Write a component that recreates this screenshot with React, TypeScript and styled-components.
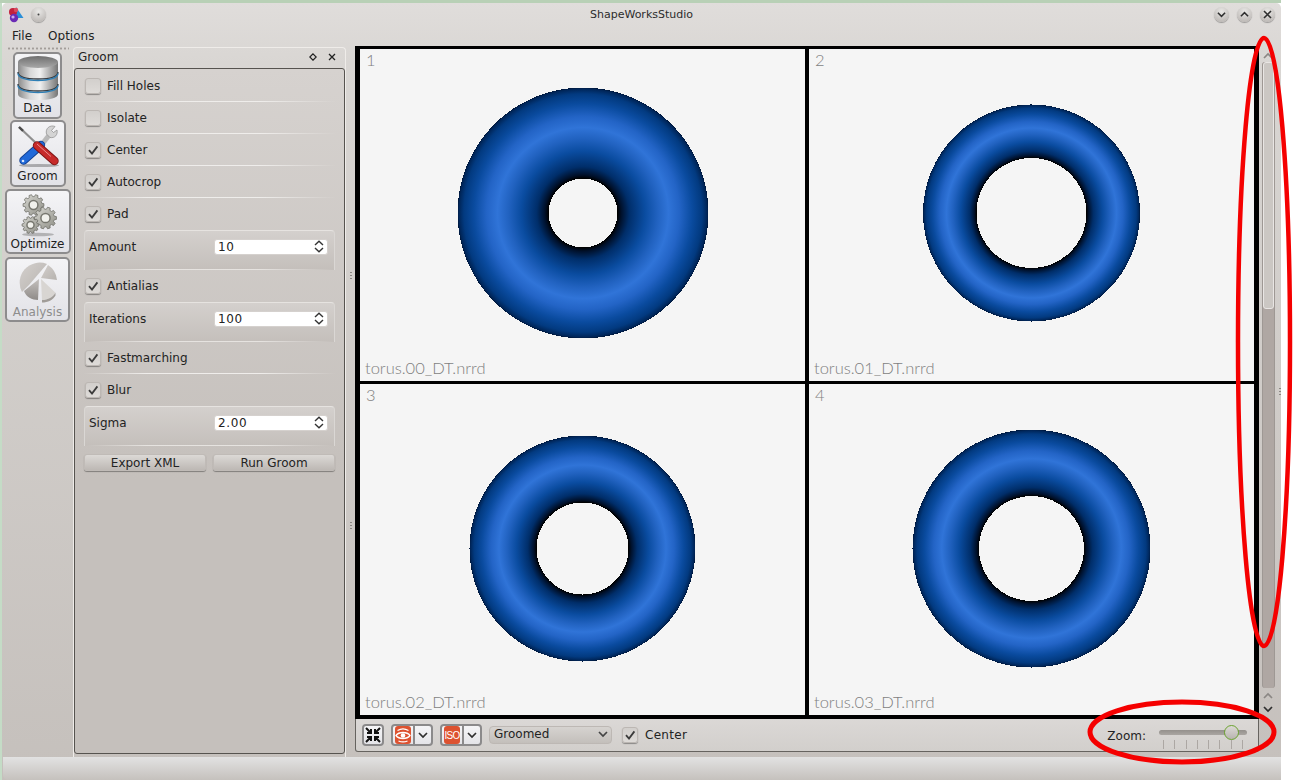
import React from "react";
import styled, { createGlobalStyle } from "styled-components";

const GlobalStyle = createGlobalStyle`
    html, body {
        margin: 0;
        padding: 0;
        background: #fff;
    }
    body {
        font-family: "DejaVu Sans", "Liberation Sans", sans-serif;
        font-size: 12px;
        color: #232323;
    }
`;

const Page = styled.div`
    position: relative;
    width: 1295px;
    height: 780px;
    overflow: hidden;
    background: linear-gradient(to right, #c4dcc6 2px, #fff 2px);
`;

const DesktopStrip = styled.div`
    width: 1281px;
    height: 3px;
    background: #b8d0b6;
`;

const Window = styled.div`
    margin-left: 2px;
    width: 1279px;
    height: 777px;
    display: flex;
    flex-direction: column;
    border-radius: 5px 5px 0 0;
    background: linear-gradient(to bottom, #e0dddb 0, #d9d6d3 60px, #c5c0bc 100%);
`;

const TitleBar = styled.div`
    height: 23px;
    display: flex;
    align-items: center;
    padding: 0 6px;
`;

const TitleLeft = styled.div`
    width: 200px;
    display: flex;
    align-items: center;
    gap: 6px;
`;

const TitleText = styled.div`
    flex: 1;
    text-align: center;
    font-size: 11px;
    color: #2c2c2c;
`;

const TitleRight = styled.div`
    width: 200px;
    display: flex;
    justify-content: flex-end;
    gap: 8px;
`;

const RoundButton = styled.div`
    width: 15px;
    height: 15px;
    border-radius: 50%;
    display: flex;
    align-items: center;
    justify-content: center;
    background: radial-gradient(circle at 50% 30%, #e9e8e6, #c0bcb9 75%, #a9a5a2);
    box-shadow: 0 1px 1px rgba(0, 0, 0, 0.3);
`;

const MenuBar = styled.div`
    height: 19px;
    display: flex;
    align-items: center;
    gap: 16px;
    padding-left: 10px;
    font-size: 12px;
`;

const Body = styled.div`
    flex: 1;
    min-height: 0;
    display: flex;
`;

const ToolColumn = styled.div`
    width: 71px;
    display: flex;
    flex-direction: column;
    align-items: center;
`;

const ToolGrip = styled.div`
    width: 62px;
    height: 3px;
    margin: 2px 0;
    background-image: radial-gradient(circle, #a39e9a 1px, transparent 1.2px);
    background-size: 4px 3px;
`;

const ToolButton = styled.div<{ $width: number; $height: number; $gap: number; $pad: number; $disabled?: boolean }>`
    box-sizing: border-box;
    width: ${(p) => p.$width}px;
    height: ${(p) => p.$height}px;
    margin-bottom: ${(p) => p.$gap}px;
    border: 2px solid #8d8c8d;
    border-radius: 5px;
    background: linear-gradient(to bottom, #f4f4f6, #e2e2e7);
    display: flex;
    flex-direction: column;
    align-items: center;
    justify-content: flex-end;
    padding-bottom: ${(p) => p.$pad}px;
    font-size: 12px;
    line-height: 15px;
    color: ${(p) => (p.$disabled ? "#8d8d8d" : "#1e1e1e")};
    svg {
        flex: none;
    }
`;

const Dock = styled.div`
    width: 273px;
    display: flex;
    flex-direction: column;
    margin-top: 2px;
    border: 1px solid #efece9;
    border-bottom: none;
    border-radius: 4px 4px 0 0;
    box-sizing: border-box;
`;

const DockHeader = styled.div`
    height: 20px;
    box-sizing: border-box;
    display: flex;
    align-items: center;
    justify-content: space-between;
    padding: 0 9px 2px 4px;
    font-size: 12px;
`;

const DockTools = styled.div`
    display: flex;
    gap: 11px;
    align-items: center;
`;

const DockPanel = styled.div`
    flex: 1;
    margin: 0 0 3px 0;
    border: 1px solid #56534f;
    border-radius: 3px;
    padding: 1px 9px 0 9px;
    background: linear-gradient(to bottom, #d6d2cf, #c5c0bc 60%);
`;

const OptionRow = styled.div<{ $plain?: boolean }>`
    height: 32px;
    box-sizing: border-box;
    display: flex;
    align-items: center;
    gap: 6px;
    padding: 0 0 0 1px;
    border-bottom: 1px solid transparent;
    border-image: ${(p) =>
        p.$plain
            ? "none"
            : "linear-gradient(to right, transparent, #efedeb 25%, #efedeb 70%, transparent) 1"};
`;

const CheckBox = styled.div`
    width: 16px;
    height: 16px;
    flex: none;
    box-sizing: border-box;
    border-radius: 3px;
    border: 1px solid #bcb7b3;
    background: linear-gradient(to bottom, #d2cfcc, #dedbd8);
    box-shadow: 0 1px 1px rgba(0, 0, 0, 0.35);
    display: flex;
    align-items: center;
    justify-content: center;
`;

const ValueGroup = styled.div`
    height: 40px;
    box-sizing: border-box;
    display: flex;
    align-items: center;
    justify-content: space-between;
    padding: 0 6px 8px 4px;
    border-radius: 4px 4px 0 0;
    border-top: 1px solid #e6e3e0;
    border-left: 1px solid #dad7d4;
    border-right: 1px solid #dad7d4;
    background:
        linear-gradient(to right, transparent, #e6e3e0 25%, #e6e3e0 70%, transparent) bottom / 100% 1px no-repeat,
        linear-gradient(to bottom, #d4d0cd, #c4bfbb);
`;

const SpinBox = styled.div`
    width: 114px;
    height: 16px;
    box-sizing: border-box;
    border-radius: 3px;
    background: #fff;
    border: 1px solid #d5d1ce;
    display: flex;
    align-items: center;
    justify-content: space-between;
    padding: 0 3px;
    font-size: 12px;
    letter-spacing: 0.6px;
`;

const ActionRow = styled.div`
    display: flex;
    gap: 7px;
    margin-top: 8px;
`;

const PushButton = styled.div`
    flex: 1;
    height: 17px;
    box-sizing: border-box;
    border-radius: 3px;
    display: flex;
    align-items: center;
    justify-content: center;
    font-size: 12px;
    border: 1px solid #c0bbb7;
    background: linear-gradient(to bottom, #dcd9d6, #bdb8b4);
    box-shadow: 0 1px 1px rgba(0, 0, 0, 0.35);
`;

const Splitter = styled.div`
    width: 9px;
    display: flex;
    flex-direction: column;
    align-items: center;
    justify-content: center;
    gap: 242px;
`;

const GripDots = styled.div`
    width: 2px;
    height: 8px;
    background-image: linear-gradient(to bottom, #8b8783 1px, transparent 1px);
    background-size: 2px 3px;
`;

const ViewColumn = styled.div`
    width: 904px;
    display: flex;
    flex-direction: column;
`;

const ViewGrid = styled.div`
    height: 673px;
    margin-top: 1px;
    box-sizing: border-box;
    background: #000;
    padding: 3px 5px 4px 5px;
    display: grid;
    grid-template-columns: 445px 445px;
    grid-template-rows: 332px 331px;
    column-gap: 4px;
    row-gap: 3px;
`;

const ViewCell = styled.div`
    display: grid;
    background: #f5f5f5;
    color: #7f7f7f;
    font-family: Lato, "Open Sans", sans-serif;
    font-weight: 300;
    overflow: hidden;
    > * {
        grid-area: 1 / 1;
    }
`;

const CellIndex = styled.div`
    align-self: start;
    padding: 1px 0 0 6px;
    font-size: 16.5px;
    line-height: 20px;
`;

const CellName = styled.div`
    align-self: end;
    padding: 0 0 3px 5px;
    font-size: 16.5px;
    line-height: 20px;
`;

const ViewToolbar = styled.div`
    height: 33px;
    box-sizing: border-box;
    border: 1px solid #66635f;
    border-top: none;
    border-radius: 0 0 3px 3px;
    background: linear-gradient(to bottom, #dbd8d6, #d2cfcc);
    display: flex;
    align-items: center;
    padding: 0 11px 0 6px;
    font-size: 12px;
`;

const IconButton = styled.div`
    width: 22px;
    height: 22px;
    box-sizing: border-box;
    border: 2px solid #8b8a8b;
    border-radius: 4px;
    background: linear-gradient(to bottom, #f5f5f7, #e4e4e8);
    display: flex;
    align-items: center;
    justify-content: center;
`;

const SplitButton = styled.div`
    width: 42px;
    height: 22px;
    margin-left: 7px;
    box-sizing: border-box;
    border: 2px solid #8b8a8b;
    border-radius: 4px;
    background: linear-gradient(to bottom, #f5f5f7, #e4e4e8);
    display: flex;
    align-items: center;
    overflow: hidden;
`;

const SplitFace = styled.div`
    width: 22px;
    display: flex;
    justify-content: center;
    border-right: 2px solid #8b8a8b;
    height: 100%;
    align-items: center;
    box-sizing: border-box;
`;

const SplitArrow = styled.div`
    flex: 1;
    display: flex;
    justify-content: center;
    align-items: center;
`;

const ComboBox = styled.div`
    width: 123px;
    height: 18px;
    margin: 0 10px 0 7px;
    box-sizing: border-box;
    border-radius: 4px;
    border: 1px solid #bdb8b4;
    background: linear-gradient(to bottom, #d6d3d0, #c3bfbb);
    display: flex;
    align-items: center;
    justify-content: space-between;
    padding: 0 3px 2px 4px;
    font-size: 12px;
`;

const CenterLabel = styled.span`
    margin-left: 7px;
    letter-spacing: 0.3px;
`;

const ZoomGroup = styled.div`
    margin-left: auto;
    display: flex;
    align-items: center;
    gap: 13px;
`;

const ZoomLabel = styled.span`
    padding-top: 2px;
`;

const ZoomSlider = styled.div`
    width: 88px;
    padding-top: 6px;
    display: flex;
    flex-direction: column;
`;

const SliderTrack = styled.div`
    height: 5px;
    margin-top: 3px;
    border-radius: 3px;
    background: linear-gradient(to bottom, #94908c, #aaa6a2);
    display: flex;
    align-items: center;
`;

const SliderHandle = styled.div<{ $left: number }>`
    width: 15px;
    height: 15px;
    margin-left: ${(p) => p.$left}px;
    flex: none;
    box-sizing: border-box;
    border-radius: 50%;
    border: 1.5px solid #6ba32f;
    background: linear-gradient(to bottom, #dcd9d6, #b9b4b0);
`;

const SliderTicks = styled.div`
    display: flex;
    justify-content: space-between;
    padding: 0 4px;
    margin-top: 5px;
`;

const SliderTick = styled.div`
    width: 1px;
    height: 9px;
    background: #aca7a3;
`;

const ScrollColumn = styled.div`
    width: 16px;
    margin-left: 1px;
    display: flex;
    flex-direction: column;
    align-items: center;
    padding-top: 4px;
    height: 672px;
`;

const ScrollStep = styled.div`
    height: 13px;
    display: flex;
    align-items: center;
    justify-content: center;
`;

const ScrollTrack = styled.div`
    width: 13px;
    height: 626px;
    margin-bottom: 1px;
    display: flex;
    flex-direction: column;
    border-radius: 3px;
    background: #afa7a3;
    border-left: 1px solid #9e9894;
    border-right: 1px solid #9e9894;
    box-sizing: border-box;
`;

const ScrollThumb = styled.div`
    height: 247px;
    box-sizing: border-box;
    border: 1px solid #e9e6e4;
    border-radius: 3px;
    background: #cbc7c3;
`;

const SideGrip = styled.div`
    flex: 1;
    display: flex;
    align-items: center;
    justify-content: flex-end;
    padding: 22px 0 0 0;
    height: 672px;
    box-sizing: border-box;
`;

const StatusBar = styled.div`
    height: 23px;
    border-radius: 0 0 0 5px;
    margin-left: 1px;
    background: linear-gradient(to bottom, #e2e2e2, #c5c1bd);
`;

const Annotation = styled.svg`
    position: absolute;
    left: 0;
    top: 0;
    pointer-events: none;
`;

const Check = () => (
    <svg width="12" height="12" viewBox="0 0 12 12">
        <path d="M2 6.2 L5 9.6 L10.4 2.4" fill="none" stroke="#3b3b3b" strokeWidth="1.8" />
    </svg>
);

const Chevron = ({ up = false, color = "#2f2f2f", size = 9 }: { up?: boolean; color?: string; size?: number }) => (
    <svg width={size} height={size} viewBox="0 0 10 10">
        <path d={up ? "M1 7 L5 3 L9 7" : "M1 3 L5 7 L9 3"} fill="none" stroke={color} strokeWidth="1.7" />
    </svg>
);

const SpinArrows = () => (
    <svg width="10" height="13" viewBox="0 0 10 13">
        <path d="M1 5 L5 1.2 L9 5 M1 8 L5 11.8 L9 8" fill="none" stroke="#333" strokeWidth="1.4" />
    </svg>
);

const AppLogo = () => (
    <svg width="17" height="17" viewBox="0 0 17 17">
        <path d="M8 1 L15.5 12 L7 12 Z" fill="#2b8fd8" />
        <circle cx="5" cy="6" r="4" fill="#c3213c" />
        <circle cx="8" cy="4" r="2.2" fill="#d94a5e" />
        <circle cx="6" cy="12" r="4.2" fill="#6a2bb5" />
        <circle cx="5" cy="11" r="1.6" fill="#c9a8ee" />
    </svg>
);

const DataIcon = () => (
    <svg width="42" height="46" viewBox="0 0 42 46">
        <defs>
            <linearGradient id="dbSide" x1="0" x2="1" y1="0" y2="0">
                <stop offset="0" stopColor="#8a8a8a" />
                <stop offset="0.3" stopColor="#d8d8d8" />
                <stop offset="0.55" stopColor="#f0f0f0" />
                <stop offset="1" stopColor="#757575" />
            </linearGradient>
            <linearGradient id="dbTop" x1="0" x2="0" y1="0" y2="1">
                <stop offset="0" stopColor="#6f6f6f" />
                <stop offset="1" stopColor="#a8a8a8" />
            </linearGradient>
        </defs>
        <path d="M1 7 V39 C1 43 10 45 21 45 C32 45 41 43 41 39 V7 Z" fill="url(#dbSide)" />
        <ellipse cx="21" cy="7" rx="20" ry="6" fill="url(#dbTop)" />
        <path d="M1 17 C1 22 10 24 21 24 C32 24 41 22 41 17" fill="none" stroke="#3a3d42" strokeWidth="1.4" />
        <path d="M1 18.5 C1 23 10 25.5 21 25.5 C32 25.5 41 23 41 18.5" fill="none" stroke="#2f7fb5" strokeWidth="1.4" />
        <path d="M1 29 C1 34 10 36 21 36 C32 36 41 34 41 29" fill="none" stroke="#3a3d42" strokeWidth="1.4" />
        <path d="M1 30.5 C1 35 10 37.5 21 37.5 C32 37.5 41 35 41 30.5" fill="none" stroke="#2f7fb5" strokeWidth="1.4" />
    </svg>
);

const GroomIcon = () => (
    <svg width="42" height="47" viewBox="0 0 42 47">
        <ellipse cx="22" cy="43.5" rx="20" ry="1.6" fill="#a9a9ac" />
        {/* screwdriver shaft */}
        <path d="M2 5 L20 22" stroke="#8f8f8f" strokeWidth="2.2" />
        <path d="M2 5 L6 8.8" stroke="#4c4c4c" strokeWidth="2.4" />
        {/* wrench */}
        <path d="M26 21 L33 12" stroke="#b9b9b9" strokeWidth="5" />
        <path d="M38 4.5 C33 2.5 28 6.5 29.5 12 L33 15.5 C38 16.5 41 12.5 40 8 L36.5 10.5 L34.5 8.5 Z" fill="#d4d4d4" stroke="#8b8b8b" strokeWidth="0.7" />
        {/* blue handle */}
        <path d="M24 23 L6.5 38.5" stroke="#123f90" strokeWidth="8.4" strokeLinecap="round" />
        <path d="M24 23 L6.5 38.5" stroke="#2169d8" strokeWidth="6.6" strokeLinecap="round" />
        <circle cx="6" cy="39" r="1.3" fill="#d8e6fb" />
        {/* red handle */}
        <path d="M20 23.5 L37.5 39" stroke="#7a1414" strokeWidth="8.4" strokeLinecap="round" />
        <path d="M20 23.5 L37.5 39" stroke="#c62a2a" strokeWidth="6.6" strokeLinecap="round" />
        <path d="M20 22 L34 34.5" stroke="#e88f8f" strokeWidth="1" />
    </svg>
);

const gearPath = (cx: number, cy: number, r: number, teeth: number) => {
    const root = r * 0.8;
    const step = (Math.PI * 2) / teeth;
    const points: string[] = [];
    for (let i = 0; i < teeth; i++) {
        const a = i * step;
        const corners: [number, number][] = [
            [root, a - step * 0.34],
            [r, a - step * 0.2],
            [r, a + step * 0.2],
            [root, a + step * 0.34],
        ];
        corners.forEach(([rad, ang]) => {
            points.push(`${(cx + rad * Math.cos(ang)).toFixed(2)} ${(cy + rad * Math.sin(ang)).toFixed(2)}`);
        });
    }
    return `M${points.join(" L")} Z`;
};

const gears = [
    { cx: 17.5, cy: 12, r: 10.5 },
    { cx: 29.5, cy: 25, r: 11 },
    { cx: 14.5, cy: 32, r: 8.5 },
];

const GearsIcon = () => (
    <svg width="44" height="44" viewBox="0 0 44 44">
        <defs>
            <linearGradient id="gearFill" x1="0" x2="1" y1="0" y2="1">
                <stop offset="0" stopColor="#d8d8d2" />
                <stop offset="1" stopColor="#8f8f87" />
            </linearGradient>
        </defs>
        <ellipse cx="22" cy="41.5" rx="16" ry="1.8" fill="#b2b2b4" />
        {gears.map((g) => (
            <g key={g.cx}>
                <path d={gearPath(g.cx, g.cy, g.r, 10)} fill="url(#gearFill)" stroke="#66665f" strokeWidth="0.7" />
                <circle cx={g.cx} cy={g.cy} r={g.r * 0.42} fill="#f1f1ec" stroke="#77776f" strokeWidth="1.5" />
            </g>
        ))}
    </svg>
);

const PieIcon = () => (
    <svg width="42" height="44" viewBox="0 0 42 44">
        <defs>
            <linearGradient id="pieFill" x1="0" x2="1" y1="0" y2="1">
                <stop offset="0" stopColor="#d4d0cd" />
                <stop offset="1" stopColor="#b6b2ae" />
            </linearGradient>
            <linearGradient id="pieLow" x1="0" x2="0" y1="0" y2="1">
                <stop offset="0" stopColor="#c4c0bd" />
                <stop offset="1" stopColor="#8f8b88" />
            </linearGradient>
        </defs>
        <path d="M30 3 A20 20 0 0 0 5 31 L12 24 Z" fill="url(#pieFill)" />
        <path d="M31 4 A20 20 0 0 1 40 19 L24 17 Z" fill="url(#pieFill)" />
        <path d="M22 18 L7 30 C9 36 15 39 21 39 Z" fill="url(#pieLow)" />
        <path d="M24 18 L38.5 31.7 C36 36 31 39 25 39 Z" fill="#d8d5d2" />
        <path d="M25 39 C31 39 36 36 38.5 31.7 L38.5 34.5 C36 39 31 41.5 25 41.5 Z" fill="#a09c98" />
    </svg>
);

const FitIcon = () => (
    <svg width="16" height="16" viewBox="0 0 16 16">
        <path d="M1 1 L6 6 M6 2 V6 H2 M15 1 L10 6 M10 2 V6 H14 M1 15 L6 10 M6 14 V10 H2 M15 15 L10 10 M10 14 V10 H14" fill="none" stroke="#111" strokeWidth="2" />
    </svg>
);

const EyeIcon = () => (
    <svg width="16" height="18" viewBox="0 0 16 18">
        <rect width="16" height="18" rx="3" fill="#dd5230" />
        <path d="M1 9.5 C4 5.5 12 5.5 15 9.5 C12 13.5 4 13.5 1 9.5 Z" fill="none" stroke="#fff" strokeWidth="1.3" />
        <circle cx="8" cy="9.5" r="2.3" fill="#fff" />
        <path d="M2.5 4.5 C6 2.4 10 2.4 13.5 4.5 M3.5 15 C6.5 16.2 9.5 16.2 12.5 15" fill="none" stroke="#fff" strokeWidth="1.2" />
    </svg>
);

const IsoBadge = styled.div`
    width: 16px;
    height: 18px;
    border-radius: 3px;
    background: #dd5230;
    color: #fff;
    font-family: "Liberation Sans", sans-serif;
    font-size: 10px;
    letter-spacing: -0.7px;
    display: flex;
    align-items: center;
    justify-content: center;
`;

const torusStops: [number, string][] = [
    [0, "#000000"],
    [0.04, "#00102a"],
    [0.13, "#002e6a"],
    [0.3, "#0a4ca0"],
    [0.44, "#2162c0"],
    [0.56, "#3074d8"],
    [0.68, "#2364c6"],
    [0.82, "#0a4b9f"],
    [0.93, "#023a80"],
    [0.985, "#002558"],
    [1, "#001638"],
];

interface TorusView {
    index: number;
    name: string;
    cx: number;
    cy: number;
    outer: number;
    inner: number;
}

const views: TorusView[] = [
    { index: 1, name: "torus.00_DT.nrrd", cx: 223, cy: 164, outer: 125.5, inner: 34.5 },
    { index: 2, name: "torus.01_DT.nrrd", cx: 222.5, cy: 164, outer: 108.5, inner: 55 },
    { index: 3, name: "torus.02_DT.nrrd", cx: 222.5, cy: 164.5, outer: 113, inner: 46 },
    { index: 4, name: "torus.03_DT.nrrd", cx: 222.5, cy: 164.5, outer: 119, inner: 52.5 },
];

const circlePath = (cx: number, cy: number, r: number) =>
    `M${cx - r} ${cy} A${r} ${r} 0 1 0 ${cx + r} ${cy} A${r} ${r} 0 1 0 ${cx - r} ${cy} Z`;

const Torus = ({ view }: { view: TorusView }) => {
    const start = view.inner / view.outer;
    return (
        <svg width="445" height="331" viewBox="0 0 445 331">
            <defs>
                <radialGradient
                    id={`torus${view.index}`}
                    gradientUnits="userSpaceOnUse"
                    cx={view.cx}
                    cy={view.cy}
                    r={view.outer}
                >
                    {torusStops.map(([t, color]) => (
                        <stop key={t} offset={start + t * (1 - start)} stopColor={color} />
                    ))}
                </radialGradient>
            </defs>
            <path
                d={`${circlePath(view.cx, view.cy, view.outer)} ${circlePath(view.cx, view.cy, view.inner)}`}
                fillRule="evenodd"
                shapeRendering="crispEdges"
                fill={`url(#torus${view.index})`}
            />
        </svg>
    );
};

const Option = ({ label, checked = true, plain = false }: { label: string; checked?: boolean; plain?: boolean }) => (
    <OptionRow $plain={plain}>
        <CheckBox>{checked && <Check />}</CheckBox>
        {label}
    </OptionRow>
);

const ValueField = ({ label, value }: { label: string; value: string }) => (
    <ValueGroup>
        {label}
        <SpinBox>
            {value}
            <SpinArrows />
        </SpinBox>
    </ValueGroup>
);

const App: React.FC = () => {
    return (
        <Page>
            <GlobalStyle />
            <DesktopStrip />
            <Window>
                <TitleBar>
                    <TitleLeft>
                        <AppLogo />
                        <RoundButton>
                            <svg width="3" height="3"><circle cx="1.5" cy="1.5" r="1" fill="#444" /></svg>
                        </RoundButton>
                    </TitleLeft>
                    <TitleText>ShapeWorksStudio</TitleText>
                    <TitleRight>
                        <RoundButton><Chevron /></RoundButton>
                        <RoundButton><Chevron up /></RoundButton>
                        <RoundButton>
                            <svg width="9" height="9" viewBox="0 0 9 9">
                                <path d="M1 1 L8 8 M8 1 L1 8" stroke="#2f2f2f" strokeWidth="1.6" />
                            </svg>
                        </RoundButton>
                    </TitleRight>
                </TitleBar>
                <MenuBar>
                    <span>File</span>
                    <span>Options</span>
                </MenuBar>
                <Body>
                    <ToolColumn>
                        <ToolGrip />
                        <ToolButton $width={49} $height={67} $gap={1} $pad={1}>
                            <DataIcon />
                            Data
                        </ToolButton>
                        <ToolButton $width={56} $height={67} $gap={2} $pad={1}>
                            <GroomIcon />
                            Groom
                        </ToolButton>
                        <ToolButton $width={66} $height={65} $gap={3} $pad={0}>
                            <GearsIcon />
                            Optimize
                        </ToolButton>
                        <ToolButton $width={65} $height={65} $gap={0} $pad={0} $disabled>
                            <PieIcon />
                            Analysis
                        </ToolButton>
                    </ToolColumn>
                    <Dock>
                        <DockHeader>
                            Groom
                            <DockTools>
                                <svg width="8" height="8" viewBox="0 0 8 8">
                                    <path d="M4 .8 L7.2 4 L4 7.2 L.8 4 Z" fill="none" stroke="#222" strokeWidth="1.2" />
                                </svg>
                                <svg width="8" height="8" viewBox="0 0 8 8">
                                    <path d="M1 1 L7 7 M7 1 L1 7" stroke="#222" strokeWidth="1.3" />
                                </svg>
                            </DockTools>
                        </DockHeader>
                        <DockPanel>
                            <Option label="Fill Holes" checked={false} />
                            <Option label="Isolate" checked={false} />
                            <Option label="Center" />
                            <Option label="Autocrop" />
                            <Option label="Pad" plain />
                            <ValueField label="Amount" value="10" />
                            <Option label="Antialias" plain />
                            <ValueField label="Iterations" value="100" />
                            <Option label="Fastmarching" />
                            <Option label="Blur" plain />
                            <ValueField label="Sigma" value="2.00" />
                            <ActionRow>
                                <PushButton>Export XML</PushButton>
                                <PushButton>Run Groom</PushButton>
                            </ActionRow>
                        </DockPanel>
                    </Dock>
                    <Splitter>
                        <GripDots />
                        <GripDots />
                    </Splitter>
                    <ViewColumn>
                        <ViewGrid>
                            {views.map((view) => (
                                <ViewCell key={view.index}>
                                    <Torus view={view} />
                                    <CellIndex>{view.index}</CellIndex>
                                    <CellName>{view.name}</CellName>
                                </ViewCell>
                            ))}
                        </ViewGrid>
                        <ViewToolbar>
                            <IconButton><FitIcon /></IconButton>
                            <SplitButton>
                                <SplitFace><EyeIcon /></SplitFace>
                                <SplitArrow><Chevron size={10} /></SplitArrow>
                            </SplitButton>
                            <SplitButton>
                                <SplitFace><IsoBadge>ISO</IsoBadge></SplitFace>
                                <SplitArrow><Chevron size={10} /></SplitArrow>
                            </SplitButton>
                            <ComboBox>
                                Groomed
                                <Chevron size={10} color="#444" />
                            </ComboBox>
                            <CheckBox><Check /></CheckBox>
                            <CenterLabel>Center</CenterLabel>
                            <ZoomGroup>
                                <ZoomLabel>Zoom:</ZoomLabel>
                                <ZoomSlider>
                                    <SliderTrack>
                                        <SliderHandle $left={65} />
                                    </SliderTrack>
                                    <SliderTicks>
                                        {Array.from({ length: 8 }, (_, i) => (
                                            <SliderTick key={i} />
                                        ))}
                                    </SliderTicks>
                                </ZoomSlider>
                            </ZoomGroup>
                        </ViewToolbar>
                    </ViewColumn>
                    <ScrollColumn>
                        <ScrollStep><Chevron up color="#8b8784" size={10} /></ScrollStep>
                        <ScrollTrack>
                            <ScrollThumb />
                        </ScrollTrack>
                        <ScrollStep><Chevron up color="#8b8784" size={10} /></ScrollStep>
                        <ScrollStep><Chevron size={10} /></ScrollStep>
                    </ScrollColumn>
                    <SideGrip>
                        <GripDots />
                    </SideGrip>
                </Body>
                <StatusBar />
            </Window>
            <Annotation width="1295" height="780" viewBox="0 0 1295 780">
                <ellipse cx="1264" cy="342" rx="26" ry="304" fill="none" stroke="#f50000" strokeWidth="4.5" />
                <ellipse cx="1182" cy="732" rx="92" ry="30" fill="none" stroke="#f50000" strokeWidth="5" />
            </Annotation>
        </Page>
    );
};

export default App;
